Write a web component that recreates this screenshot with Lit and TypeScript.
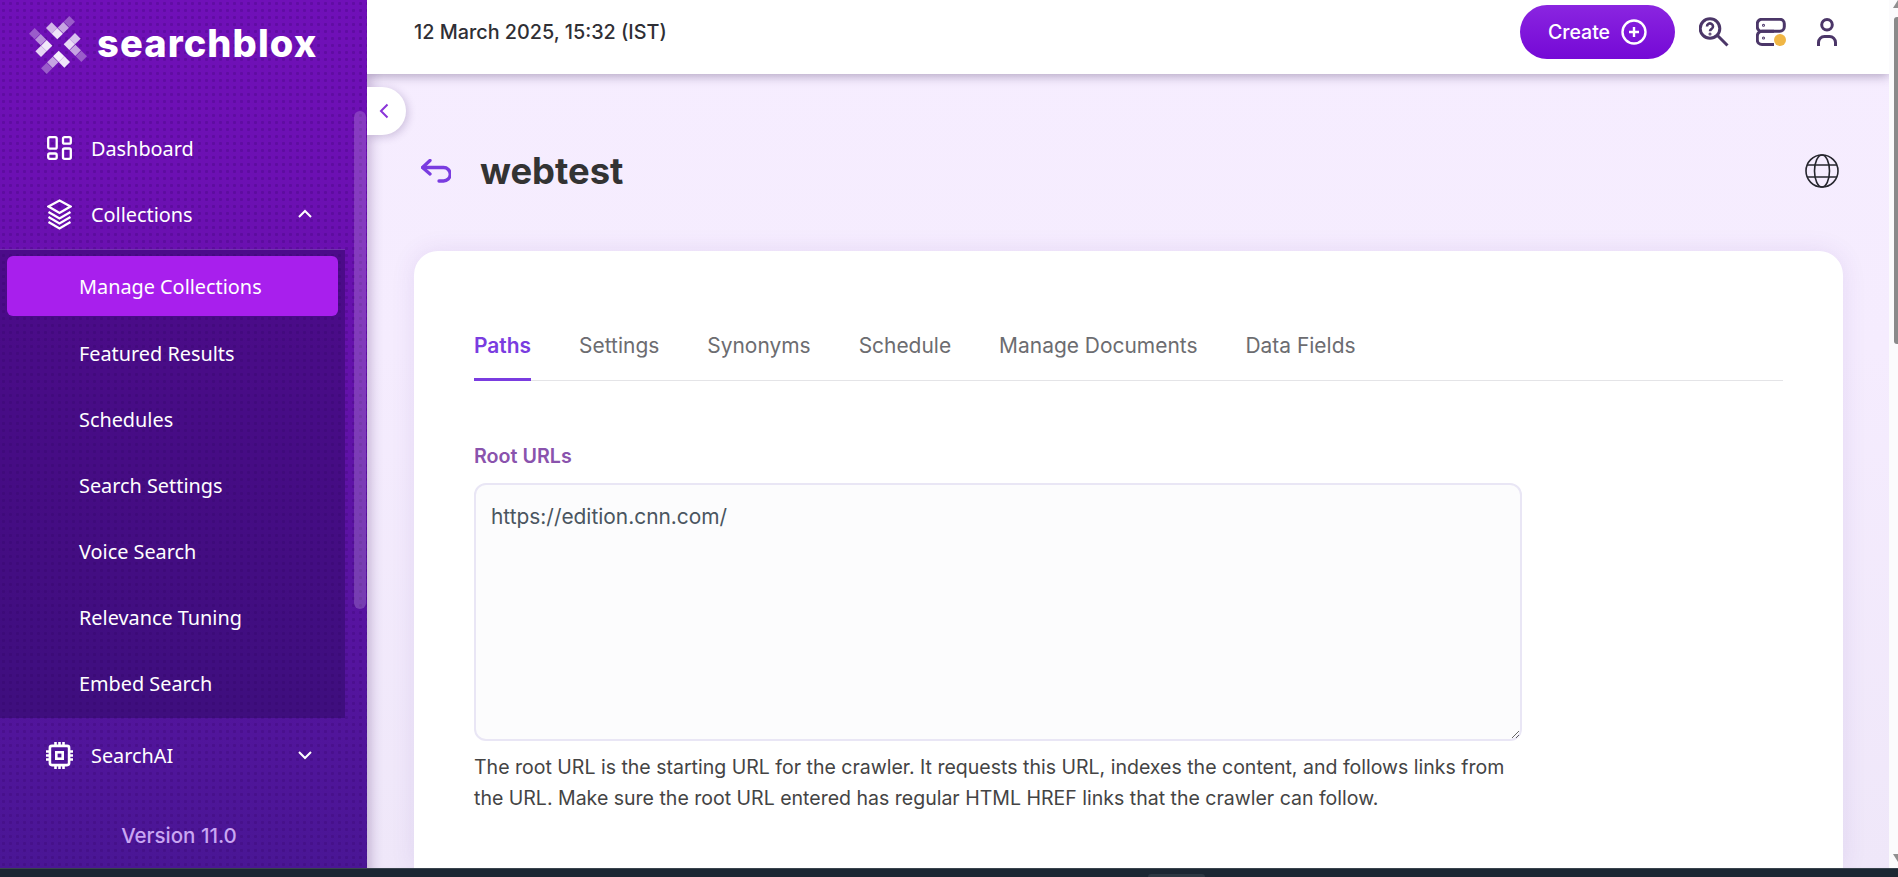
import { LitElement, html, css, svg } from "lit";
import { customElement } from "lit/decorators.js";

const subItems = [
  "Manage Collections",
  "Featured Results",
  "Schedules",
  "Search Settings",
  "Voice Search",
  "Relevance Tuning",
  "Embed Search",
];

const tabs = ["Paths", "Settings", "Synonyms", "Schedule", "Manage Documents", "Data Fields"];

// logo cells on a grid turned 45deg: [u, v, colour]
const logoCells: [number, number, string][] = [
  [7.5, -16.5, "#d2b6e8"],
  [7.5, -8.5, "#efe4f8"],
  [16, -8.5, "#c6a4e2"],
  [24.5, -8.5, "#9a5cca"],
  [16.5, 7.5, "#d8c2ee"],
  [8.5, 7.5, "#eadcf6"],
  [8.5, 16, "#c6a4e2"],
  [8.5, 24.5, "#9a5cca"],
  [-7.5, 16.5, "#f0e6f9"],
  [-7.5, 8.5, "#f5effb"],
  [-16, 8.5, "#c6a4e2"],
  [-24.5, 8.5, "#9a5cca"],
  [-16.5, -7.5, "#e6d6f4"],
  [-8.5, -7.5, "#f2e9fa"],
  [-8.5, -16, "#bb93dc"],
  [-8.5, -24.5, "#9a5cca"],
];

const dashIcon = svg`<rect x="1.200" y="1.200" width="8.500" height="11.500" rx="1.500"/><rect x="16" y="1.200" width="7.800" height="6.500" rx="1.500"/><rect x="1.200" y="17.500" width="8.500" height="5.300" rx="1.500"/><rect x="16" y="12.500" width="7.800" height="10.300" rx="1.500"/>`;
const layersIcon = svg`<path d="M12.500 1.500 23.500 7.500 12.500 14 1.500 7.500z"/><path d="m1.500 13 11 6.500 11-6.500"/><path d="m1.500 18 11 6.500 11-6.500"/><path d="m1.500 23 11 6.500 11-6.500"/>`;
const chipIcon = svg`<rect x="3.900" y="3.900" width="19.200" height="19.200" rx="2"/><rect x="10.300" y="10.300" width="6.400" height="6.400"/><path d="M9.500 0v3M13.500 0v3M17.500 0v3M9.500 24v3M13.500 24v3M17.500 24v3M0 9.500h3M0 13.500h3M0 17.500h3M24 9.500h3M24 13.500h3M24 17.500h3"/>`;

@customElement("app-root")
export class AppRoot extends LitElement {
  static styles = css`
    :host {
      display: block;
      height: 877px;
      overflow: hidden;
      position: relative;
      font-family: Inter, "Liberation Sans", sans-serif;
    }
    .page {
      display: flex;
      height: 868px;
    }
    .sidebar {
      width: 367px;
      flex: none;
      display: flex;
      background-color: #5a119f;
      background-image:
        radial-gradient(circle, rgba(50, 0, 100, 0.24) 1.3px, transparent 1.8px),
        linear-gradient(180deg, #7010b8 0%, #6a10b0 30%, #4a1695 100%);
      background-size: 7px 7px, 100% 100%;
      color: #fff;
      position: relative;
      flex-direction: column;
    }
    .logo {
      display: flex;
      align-items: center;
      height: 74px;
      box-sizing: border-box;
      padding: 16px 0 0 28px;
      gap: 10px;
      flex: none;
    }
    .logo-text {
      font: 800 38px/1 Inter, sans-serif;
      letter-spacing: 1.1px;
      margin-top: -4px;
      margin-left: -1px;
    }
    .nav {
      width: 345px;
      padding-top: 41px;
      font-family: "Noto Sans", sans-serif;
      font-size: 19.850px;
      font-weight: 400;
    }
    .nav-row {
      display: flex;
      align-items: center;
      height: 66px;
      padding-left: 47px;
      position: relative;
    }
    .nav-icon {
      fill: none;
      stroke: #fff;
      stroke-width: 2.300;
      flex: none;
      display: block;
    }
    .icon-slot {
      width: 44px;
      flex: none;
      display: flex;
    }
    .icon-slot.chip {
      margin-left: -1px;
      width: 45px;
    }
    .icon-slot.chip .nav-icon {
      stroke-width: 2.600;
    }
    .caret {
      position: absolute;
      left: 297px;
      width: 16px;
      height: 12px;
      fill: none;
      stroke: #fff;
      stroke-width: 2;
    }
    .sub {
      background: rgba(40, 6, 90, 0.45);
      border-top: 1px solid rgba(150, 90, 210, 0.5);
      margin: 2px 0 4px;
      padding: 6px 7px 0;
      height: 469px;
      box-sizing: border-box;
    }
    .sub-item {
      height: 66px;
      display: flex;
      align-items: center;
      padding-left: 72px;
      box-sizing: border-box;
    }
    .sub-item.first {
      background: #a81fed;
      border-radius: 6px;
      height: 60px;
      margin-bottom: 4px;
    }
    .version {
      position: absolute;
      left: 0;
      top: 823px;
      width: 358px;
      text-align: center;
      font-size: 20.500px;
      font-weight: 500;
      color: #c9a6f2;
    }
    .side-track {
      position: absolute;
      left: 354px;
      top: 111px;
      width: 12px;
      height: 498px;
      border-radius: 6px;
      background: rgba(255, 255, 255, 0.18);
    }
    .main {
      flex: 1;
      min-width: 0;
      background: linear-gradient(180deg, #f6edff 0%, #f5ecfe 40%, #efe7f9 100%);
      display: flex;
      flex-direction: column;
      position: relative;
      box-shadow: inset 14px 0 12px -10px rgba(60, 20, 100, 0.25);
      overflow: hidden;
    }
    .topbar {
      height: 74px;
      box-sizing: border-box;
      flex: none;
      background: #fff;
      box-shadow: 0 2px 10px rgba(60, 40, 90, 0.38);
      display: flex;
      align-items: center;
      padding: 0 0 10px 47px;
      position: relative;
      z-index: 2;
    }
    .date {
      font-size: 19.800px;
      font-weight: 500;
      color: #2f2f35;
      flex: 1;
    }
    .create {
      width: 155px;
      height: 54px;
      border-radius: 27px;
      border: none;
      margin-right: 24px;
      background: linear-gradient(180deg, #8a25e0 0%, #7509d6 100%);
      color: #fff;
      display: flex;
      align-items: center;
      justify-content: center;
      gap: 11px;
      font: 500 19.500px Inter, sans-serif;
      padding: 0;
    }
    .create svg {
      width: 26px;
      height: 26px;
      fill: none;
      stroke: #fff;
      stroke-width: 2.400;
    }
    .tools {
      display: flex;
      align-items: center;
      gap: 27px;
      padding-right: 52px;
    }
    .tools svg {
      display: block;
      fill: none;
      stroke: #4b3668;
      stroke-width: 3;
    }
    .tools .user {
      margin-left: 4px;
    }
    .collapse {
      position: absolute;
      left: 0;
      top: 87px;
      width: 39px;
      height: 48px;
      background: #fff;
      border-radius: 0 24px 24px 0;
      box-shadow: 2px 2px 8px rgba(60, 30, 100, 0.22);
      display: flex;
      align-items: center;
      padding-left: 12px;
      box-sizing: border-box;
      z-index: 3;
    }
    .collapse svg {
      width: 10px;
      height: 16px;
      fill: none;
      stroke: #8a34d8;
      stroke-width: 2;
    }
    .content {
      padding: 0 46px 0 47px;
      flex: 1;
      display: flex;
      flex-direction: column;
      min-height: 0;
    }
    .title-row {
      display: flex;
      align-items: center;
      height: 177px;
      box-sizing: border-box;
      padding-top: 17px;
      flex: none;
    }
    .back {
      width: 30px;
      height: 24px;
      fill: none;
      stroke: #7a3ce0;
      stroke-width: 3.300;
      stroke-linecap: round;
      stroke-linejoin: round;
      margin: 0 29px 0 7px;
      flex: none;
    }
    h1 {
      margin: 0;
      flex: 1;
      font-size: 36.400px;
      font-weight: 700;
      color: #333;
    }
    .globe {
      width: 34px;
      height: 34px;
      fill: none;
      stroke: #26262e;
      stroke-width: 1.600;
      margin-right: 4px;
    }
    .card {
      flex: 1;
      background: #fff;
      border-radius: 24px 24px 0 0;
      box-shadow: 0 0 24px rgba(90, 50, 160, 0.1);
      padding: 71px 60px 0;
    }
    .tab-bar {
      display: flex;
      gap: 48px;
      border-bottom: 1px solid #e4e4e7;
      height: 59px;
      box-sizing: border-box;
    }
    .tab {
      font-size: 20.950px;
      line-height: 24px;
      padding-top: 12px;
      color: #6c6c70;
      box-sizing: border-box;
      height: 59px;
    }
    .tab.active {
      color: #7a3ce0;
      font-weight: 600;
      border-bottom: 3px solid #7a3ce0;
    }
    .label {
      margin-top: 63px;
      font-size: 19.700px;
      line-height: 24px;
      font-weight: 600;
      color: #8a53ad;
    }
    .urls {
      display: block;
      margin-top: 15px;
      width: 1048px;
      height: 258px;
      box-sizing: border-box;
      border: 2px solid #e9e6f5;
      border-radius: 12px;
      background: #fcfcfd;
      padding: 18px 15px;
      font: 400 20.900px/28px Inter, sans-serif;
      color: #4a5560;
      resize: both;
      outline: none;
    }
    .hint {
      margin: 11px 0 0;
      width: 1048px;
      font-size: 19.530px;
      line-height: 30.500px;
      color: #444;
    }
    .scroll {
      width: 9px;
      flex: none;
      background: #fbfbfc;
      position: relative;
    }
    .scroll::before {
      content: "";
      position: absolute;
      left: 5px;
      right: 0;
      top: 17px;
      height: 327px;
      background: #8a8a8a;
      border-radius: 3px 0 0 3px;
    }
    .arrow {
      position: absolute;
      left: 4px;
      width: 5px;
      height: 8px;
      background: #8f8f8f;
    }
    .arrow.up {
      top: 0;
      clip-path: polygon(100% 0, 100% 100%, 0 100%);
    }
    .arrow.down {
      top: 854px;
      clip-path: polygon(0 0, 100% 0, 100% 100%);
    }
    .taskbar {
      height: 9px;
      background: #1b2733;
      border-top: 1px solid #39434d;
      box-sizing: border-box;
      position: relative;
    }
    .taskbar-tab {
      position: absolute;
      left: 1148px;
      top: 5px;
      width: 57px;
      height: 3px;
      background: #2c3843;
      border-radius: 4px 4px 0 0;
    }
  `;

  render() {
    return html`
      <div class="page">
        <aside class="sidebar">
          <div class="logo">
            <svg width="60" height="60" viewBox="-30 -30 60 60">
              <g transform="rotate(-45)">
                ${logoCells.map(
                  ([u, v, c]) => svg`<rect x=${u - 4} y=${v - 4} width="8" height="8" fill=${c} />`
                )}
              </g>
            </svg>
            <span class="logo-text">searchblox</span>
          </div>
          <nav class="nav">
            <div class="nav-row">
              <span class="icon-slot"><svg class="nav-icon" width="25" height="24" viewBox="0 0 25 24">${dashIcon}</svg></span>Dashboard
            </div>
            <div class="nav-row">
              <span class="icon-slot"><svg class="nav-icon" width="25" height="31" viewBox="0 0 25 31">${layersIcon}</svg></span>Collections
              <svg class="caret" viewBox="0 0 16 12"><path d="m2 9 6-6 6 6"/></svg>
            </div>
            <div class="sub">
              ${subItems.map(
                (s, i) => html`<div class="sub-item ${i === 0 ? "first" : ""}">${s}</div>`
              )}
            </div>
            <div class="nav-row">
              <span class="icon-slot chip"><svg class="nav-icon" width="27" height="27" viewBox="0 0 27 27">${chipIcon}</svg></span>SearchAI
              <svg class="caret" viewBox="0 0 16 12"><path d="m2 3 6 6 6-6"/></svg>
            </div>
          </nav>
          <div class="version">Version 11.0</div>
          <div class="side-track"></div>
        </aside>
        <main class="main">
          <header class="topbar">
            <div class="date">12 March 2025, 15:32 (IST)</div>
            <button class="create">
              Create
              <svg viewBox="0 0 26 26"><circle cx="13" cy="13" r="11.500"/><path d="M13 8v10M8 13h10"/></svg>
            </button>
            <div class="tools">
              <svg width="30" height="30" viewBox="0 0 30 30">
                <circle cx="11" cy="11.500" r="9.800"/>
                <path d="m18.500 18.500 10 10"/>
                <path d="M8 9.500a3 3 0 1 1 4.600 2.500c-1 .7-1.600 1-1.600 2.200" stroke-width="2.600"/>
                <circle cx="11" cy="17" r="0.500" stroke-width="2"/>
              </svg>
              <svg width="30" height="28" viewBox="0 0 30 28">
                <rect x="1.300" y="1.300" width="27" height="12" rx="4.500"/>
                <path d="M18 26.500H6a4.700 4.700 0 0 1-4.700-4.700v-3.800A4.700 4.700 0 0 1 6 13.300h12"/>
                <circle cx="7.500" cy="7.300" r="0.500" stroke-width="2"/>
                <circle cx="7.500" cy="20" r="0.500" stroke-width="2"/>
                <circle cx="24" cy="22" r="6" fill="#f0b645" stroke="none"/>
              </svg>
              <svg class="user" width="20" height="28" viewBox="0 0 20 28">
                <circle cx="10" cy="6.800" r="5.300"/>
                <path d="M1.500 28v-3.500a6 6 0 0 1 6-6h5a6 6 0 0 1 6 6V28"/>
              </svg>
            </div>
          </header>
          <div class="collapse">
            <svg viewBox="0 0 10 16"><path d="M8.500 1.500 2 8l6.500 6.500"/></svg>
          </div>
          <section class="content">
            <div class="title-row">
              <svg class="back" viewBox="0 0 30 24">
                <path d="M9 1.500 1.500 8.500 9 15"/>
                <path d="M2 8.500h20.500a6 6 0 0 1 0 13.500h-4.500"/>
              </svg>
              <h1>webtest</h1>
              <svg class="globe" viewBox="0 0 34 34">
                <circle cx="17" cy="17" r="16"/>
                <ellipse cx="17" cy="17" rx="7.500" ry="16"/>
                <path d="M2 11h30M2 23h30"/>
              </svg>
            </div>
            <div class="card">
              <div class="tab-bar">
                ${tabs.map(
                  (t, i) => html`<div class="tab ${i === 0 ? "active" : ""}">${t}</div>`
                )}
              </div>
              <div class="label">Root URLs</div>
              <textarea class="urls" readonly>https://edition.cnn.com/</textarea>
              <p class="hint">
                The root URL is the starting URL for the crawler. It requests this URL, indexes the
                content, and follows links from the URL. Make sure the root URL entered has regular
                HTML HREF links that the crawler can follow.
              </p>
            </div>
          </section>
        </main>
        <div class="scroll">
          <span class="arrow up"></span>
          <span class="arrow down"></span>
        </div>
      </div>
      <div class="taskbar"><span class="taskbar-tab"></span></div>
    `;
  }
}
